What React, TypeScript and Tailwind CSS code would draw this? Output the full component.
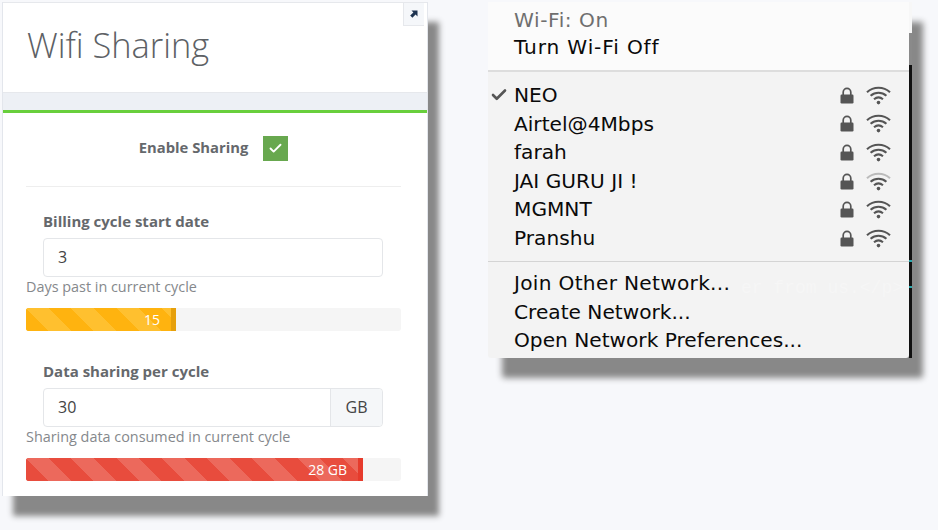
import { Check } from "lucide-react";

const networks = [
  { name: "NEO", active: true },
  { name: "Airtel@4Mbps" },
  { name: "farah" },
  { name: "JAI GURU JI !", weak: true },
  { name: "MGMNT" },
  { name: "Pranshu" },
];

function LockIcon() {
  return (
    <svg width="14" height="17" viewBox="0 0 14 17" className="shrink-0">
      <path d="M3.2 8V5.2a3.8 3.8 0 0 1 7.6 0V8" fill="none" stroke="#555" strokeWidth="1.7" />
      <rect x="0.5" y="7.5" width="13" height="9" rx="1.2" fill="#555" />
    </svg>
  );
}

function WifiIcon({ weak }: { weak?: boolean }) {
  return (
    <svg width="25" height="19" viewBox="0 0 25 19" fill="none" strokeWidth="2.1" className="shrink-0">
      <path d="M1 6.2C7.5 0.2 17.5 0.2 24 6.2" stroke={weak ? "#bbb" : "#555"} />
      <path d="M4.6 9.8C9.2 5.8 15.8 5.8 20.4 9.8" stroke="#555" />
      <path d="M8 13.2C10.7 11 14.3 11 17 13.2" stroke="#555" />
      <circle cx="12.5" cy="16.6" r="1.8" fill="#555" />
    </svg>
  );
}

function Progress({ label, width, fill, edge, stripe }: { label: string; width: string; fill: string; edge: string; stripe: string }) {
  return (
    <div className="h-[23px] w-[375px] rounded-[3px] bg-[#f5f5f5] overflow-hidden">
      <div
        className={`relative flex h-full items-center justify-end pr-[11px] pb-[1px] text-[14px] text-white ${width} ${fill} ${stripe} border-r-[5px] ${edge}`}
      >
        {label}
      </div>
    </div>
  );
}

function MenuItem({ children, className }: { children: React.ReactNode; className?: string }) {
  return <div className={`h-[28.6px] pl-[26px] leading-[28.6px] text-[#0a0a0a] ${className ?? ""}`}>{children}</div>;
}

export default function App() {
  return (
    <div className="flex h-[530px] w-[938px] items-start overflow-hidden bg-[#f7f8fb] pt-[2px] pl-[2px]">
      {/* ── Wifi Sharing panel ───────────────────────────── */}
      <div className="relative flex h-[494px] w-[426px] shrink-0 flex-col border-x border-[#e3e6ec] bg-[#edf0f5] font-['Open_Sans',sans-serif] shadow-[11px_20px_6px_#888888]">
        <div className="h-[91px] shrink-0 border-y border-[#e6e8ec] bg-white pt-[17px] pl-[24px] text-[34.4px] leading-[50px] font-light text-[#5d6165]">
          Wifi Sharing
        </div>
        <div className="absolute top-[1px] right-[3px] flex h-[23px] w-[21px] items-center justify-center border-b border-l border-[#e6e8ec] bg-[#f5f7fa]">
          <svg width="8" height="8" viewBox="0 0 8 8">
            <path d="M1.5 0.5H7.5V6.5L5.6 4.6L2.4 7.8L0.2 5.6L3.4 2.4Z" fill="#1e3350" />
          </svg>
        </div>
        <div className="mt-[17px] h-[3px] shrink-0 bg-[#68cf3c]" />
        <div className="flex-1 bg-white pl-[23px]">
          <div className="flex h-[74px] w-[375px] items-center justify-center border-b border-[#eeeeee] pb-[3px]">
            <span className="mb-[2px] text-[14.8px] font-bold text-[#65686c]">Enable Sharing</span>
            <span className="ml-[15px] flex h-[25px] w-[25px] items-center justify-center bg-[#68a84f]">
              <Check size={15} strokeWidth={3} className="text-white" />
            </span>
          </div>
          <div className="mt-[24px] pl-[17px] text-[15px] leading-[20px] font-bold text-[#65686c]">
            Billing cycle start date
          </div>
          <div className="mt-[7px] ml-[17px] flex h-[39px] w-[340px] items-center rounded-[4px] border border-[#e4e6e9] bg-white pb-[2px] pl-[14px] text-[16px] text-[#444]">
            3
          </div>
          <div className="text-[14.4px] leading-[20px] text-[#85888c]">Days past in current cycle</div>
          <div className="mt-[11px]">
            <Progress
              label="15"
              width="w-[150px]"
              fill="bg-[#ffb30f]"
              edge="border-[#e6a00c]"
              stripe="bg-[repeating-linear-gradient(45deg,#ffb30f_0_16px,#ffc02f_16px_32px)]"
            />
          </div>
          <div className="mt-[30px] pl-[17px] text-[15px] leading-[20px] font-bold text-[#65686c]">
            Data sharing per cycle
          </div>
          <div className="mt-[7px] ml-[17px] flex h-[39px] w-[340px] items-stretch rounded-[4px] border border-[#e4e6e9] bg-white text-[16px] text-[#444]">
            <div className="flex flex-1 items-center pb-[2px] pl-[14px]">30</div>
            <div className="flex w-[52px] items-center justify-center rounded-r-[4px] border-l border-[#e4e6e9] bg-[#f5f7f9] pb-[2px]">GB</div>
          </div>
          <div className="text-[14.4px] leading-[20px] text-[#85888c]">Sharing data consumed in current cycle</div>
          <div className="mt-[11px]">
            <Progress
              label="28 GB"
              width="w-[337px]"
              fill="bg-[#e84c3d]"
              edge="border-[#e63b2c]"
              stripe="bg-[repeating-linear-gradient(45deg,#e84c3d_0_16px,#ec695c_16px_32px)]"
            />
          </div>
        </div>
      </div>

      {/* ── Wi-Fi menu ───────────────────────────────────── */}
      <div className="relative ml-[60px] h-[356px] w-[421px] shrink-0 rounded-b-[3px] bg-[#f3f3f3] font-['DejaVu_Sans',sans-serif] text-[20.15px] shadow-[14px_20px_6px_#888888]">
        {/* window peeking out behind the translucent menu */}
        <div className="absolute top-0 left-full h-full w-[3px] bg-[linear-gradient(#f7f7f7_0_31px,#8a8a8a_31px_63px,#111_63px)]">
          <div className="absolute top-[258px] left-0 h-[2px] w-[3px] bg-[#2aa7ad]" />
          <div className="absolute top-[284px] left-0 h-[2px] w-[3px] bg-[#2aa7ad]" />
        </div>
        <div className="absolute top-[6px] right-[50px] font-['Liberation_Serif',serif] text-[17px] font-bold whitespace-nowrap text-[#f6f6f6]">
          github.io — vim — 126×33
        </div>
        <div className="absolute top-[273px] right-[6px] font-['Liberation_Mono',monospace] text-[18px] whitespace-nowrap text-[#f6f6f6]">
          er from us.&lt;/p&gt;
        </div>
        <div className="relative h-[70px] border-b-[2px] border-[#dddddd] bg-[#fcfcfc]/80 pt-[4px]">
          <div className="h-[27px] pl-[26px] leading-[28px] tracking-[0.55px] text-[#6f6f6f]">Wi-Fi: On</div>
          <MenuItem className="tracking-[0.85px]">Turn Wi-Fi Off</MenuItem>
        </div>
        <div className="relative h-[190px] border-b border-[#d4d4d4] pt-[9px]">
          {networks.map((n) => (
            <div key={n.name} className="flex h-[28.6px] items-center pr-[18px] leading-[28.6px] text-[#0a0a0a]">
              <span className="flex w-[26px] pr-[4px] justify-center text-[#555]">
                {n.active && <Check size={18} strokeWidth={3.5} />}
              </span>
              <span className="flex-1">{n.name}</span>
              <LockIcon />
              <span className="ml-[12px]">
                <WifiIcon weak={n.weak} />
              </span>
            </div>
          ))}
        </div>
        <div className="relative pt-[7px]">
          <MenuItem className="tracking-[0.3px]">Join Other Network...</MenuItem>
          <MenuItem>Create Network...</MenuItem>
          <MenuItem>Open Network Preferences...</MenuItem>
        </div>
      </div>
    </div>
  );
}
